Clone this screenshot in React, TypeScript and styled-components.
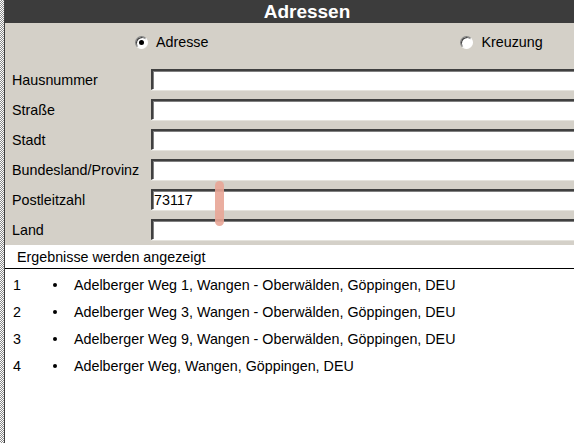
import styled, { createGlobalStyle } from 'styled-components';

const GlobalStyle = createGlobalStyle`
    html, body {
        margin: 0;
        padding: 0;
        width: 574px;
        height: 443px;
        overflow: hidden;
        background: #ffffff;
        font-family: "Liberation Sans", Arial, sans-serif;
    }
`;

const Screen = styled.div`
    display: flex;
    width: 574px;
    height: 443px;
    overflow: hidden;
    position: relative;
`;

const Edge = styled.div`
    flex: 0 0 4px;
    background: repeating-conic-gradient(#8a8a8a 0 25%, #ffffff 0 50%) 0 0 / 2px 2px;
    border-right: 1px solid #404040;
`;

const Panel = styled.div`
    flex: 0 0 604px;
    display: flex;
    flex-direction: column;
`;

const Title = styled.div`
    height: 23px;
    background: #3c3c3c;
    color: #ffffff;
    font-size: 19px;
    font-weight: bold;
    text-align: center;
    line-height: 23px;
`;

const Form = styled.div`
    background: #d4d0c8;
    padding: 7px 0 5px 2px;
`;

const Choices = styled.div`
    display: flex;
    height: 24px;
    align-items: center;
    padding-left: 128px;
`;

const Choice = styled.label<{ $gap: number }>`
    display: flex;
    align-items: center;
    gap: 8px;
    font-size: 14.3px;
    color: #000000;
    margin-right: ${(p) => p.$gap}px;
`;

const Radio = styled.span<{ $on?: boolean }>`
    position: relative;
    box-sizing: border-box;
    width: 13px;
    height: 13px;
    border-radius: 50%;
    background: #ffffff;
    border: 1px solid;
    border-color: #808080 #ffffff #ffffff #808080;
    box-shadow: inset 1px 1px 0 #404040, 0 0 0 0.5px #d4d0c8;
    &::after {
        content: '';
        display: ${(p) => (p.$on ? 'block' : 'none')};
        position: absolute;
        left: 3px;
        top: 3px;
        width: 5px;
        height: 5px;
        border-radius: 50%;
        background: #000000;
    }
`;

const Rows = styled.div`
    display: flex;
    flex-direction: column;
    gap: 9px;
    margin-top: 15px;
`;

const Row = styled.div`
    display: grid;
    grid-template-columns: 144px 1fr;
    align-items: center;
    height: 21px;
`;

const Label = styled.span`
    font-size: 14.3px;
    color: #000000;
    padding: 1px 0 0 5px;
`;

const Field = styled.div`
    box-sizing: border-box;
    height: 21px;
    background: #ffffff;
    border-top: 2px solid #404040;
    border-left: 2px solid #404040;
    border-bottom: 1px solid #ffffff;
    box-shadow: inset 1px 1px 0 #808080, 0 1px 0 #e4e2dc;
    font-size: 14.3px;
    line-height: 18px;
    padding-left: 1px;
    color: #000000;
`;

const Results = styled.div`
    flex: 1;
    background: #ffffff;
`;

const ResultsHead = styled.div`
    height: 23px;
    border-bottom: 1px solid #000000;
    font-size: 14.3px;
    line-height: 24px;
    padding-left: 12px;
    color: #000000;
`;

const List = styled.div`
    display: flex;
    flex-direction: column;
    padding-top: 2px;
`;

const Item = styled.div`
    display: grid;
    grid-template-columns: 39px 22px 1fr;
    height: 27px;
    align-items: center;
    font-size: 14.3px;
    color: #000000;
    padding-left: 8px;
`;

const Dot = styled.span`
    width: 4px;
    height: 4px;
    border-radius: 50%;
    background: #000000;
    margin-left: 1px;
`;

const Mark = styled.div`
    position: absolute;
    left: 215px;
    top: 181px;
    width: 9px;
    height: 45px;
    border-radius: 5px;
    background: #e8a596;
    opacity: 0.9;
`;

const fields = [
    { label: 'Hausnummer', value: '' },
    { label: 'Straße', value: '' },
    { label: 'Stadt', value: '' },
    { label: 'Bundesland/Provinz', value: '' },
    { label: 'Postleitzahl', value: '73117' },
    { label: 'Land', value: '' },
];

const results = [
    'Adelberger Weg 1, Wangen - Oberwälden, Göppingen, DEU',
    'Adelberger Weg 3, Wangen - Oberwälden, Göppingen, DEU',
    'Adelberger Weg 9, Wangen - Oberwälden, Göppingen, DEU',
    'Adelberger Weg, Wangen, Göppingen, DEU',
];

const App = () => {
    return (
        <Screen>
            <GlobalStyle />
            <Edge />
            <Panel>
                <Title>Adressen</Title>
                <Form>
                    <Choices>
                        <Choice $gap={252}>
                            <Radio $on />
                            Adresse
                        </Choice>
                        <Choice $gap={0}>
                            <Radio />
                            Kreuzung
                        </Choice>
                    </Choices>
                    <Rows>
                        {fields.map((f) => (
                            <Row key={f.label}>
                                <Label>{f.label}</Label>
                                <Field>{f.value}</Field>
                            </Row>
                        ))}
                    </Rows>
                </Form>
                <Results>
                    <ResultsHead>Ergebnisse werden angezeigt</ResultsHead>
                    <List>
                        {results.map((r, i) => (
                            <Item key={r}>
                                <span>{i + 1}</span>
                                <Dot />
                                <span>{r}</span>
                            </Item>
                        ))}
                    </List>
                </Results>
            </Panel>
            <Mark />
        </Screen>
    );
};

export default App;
